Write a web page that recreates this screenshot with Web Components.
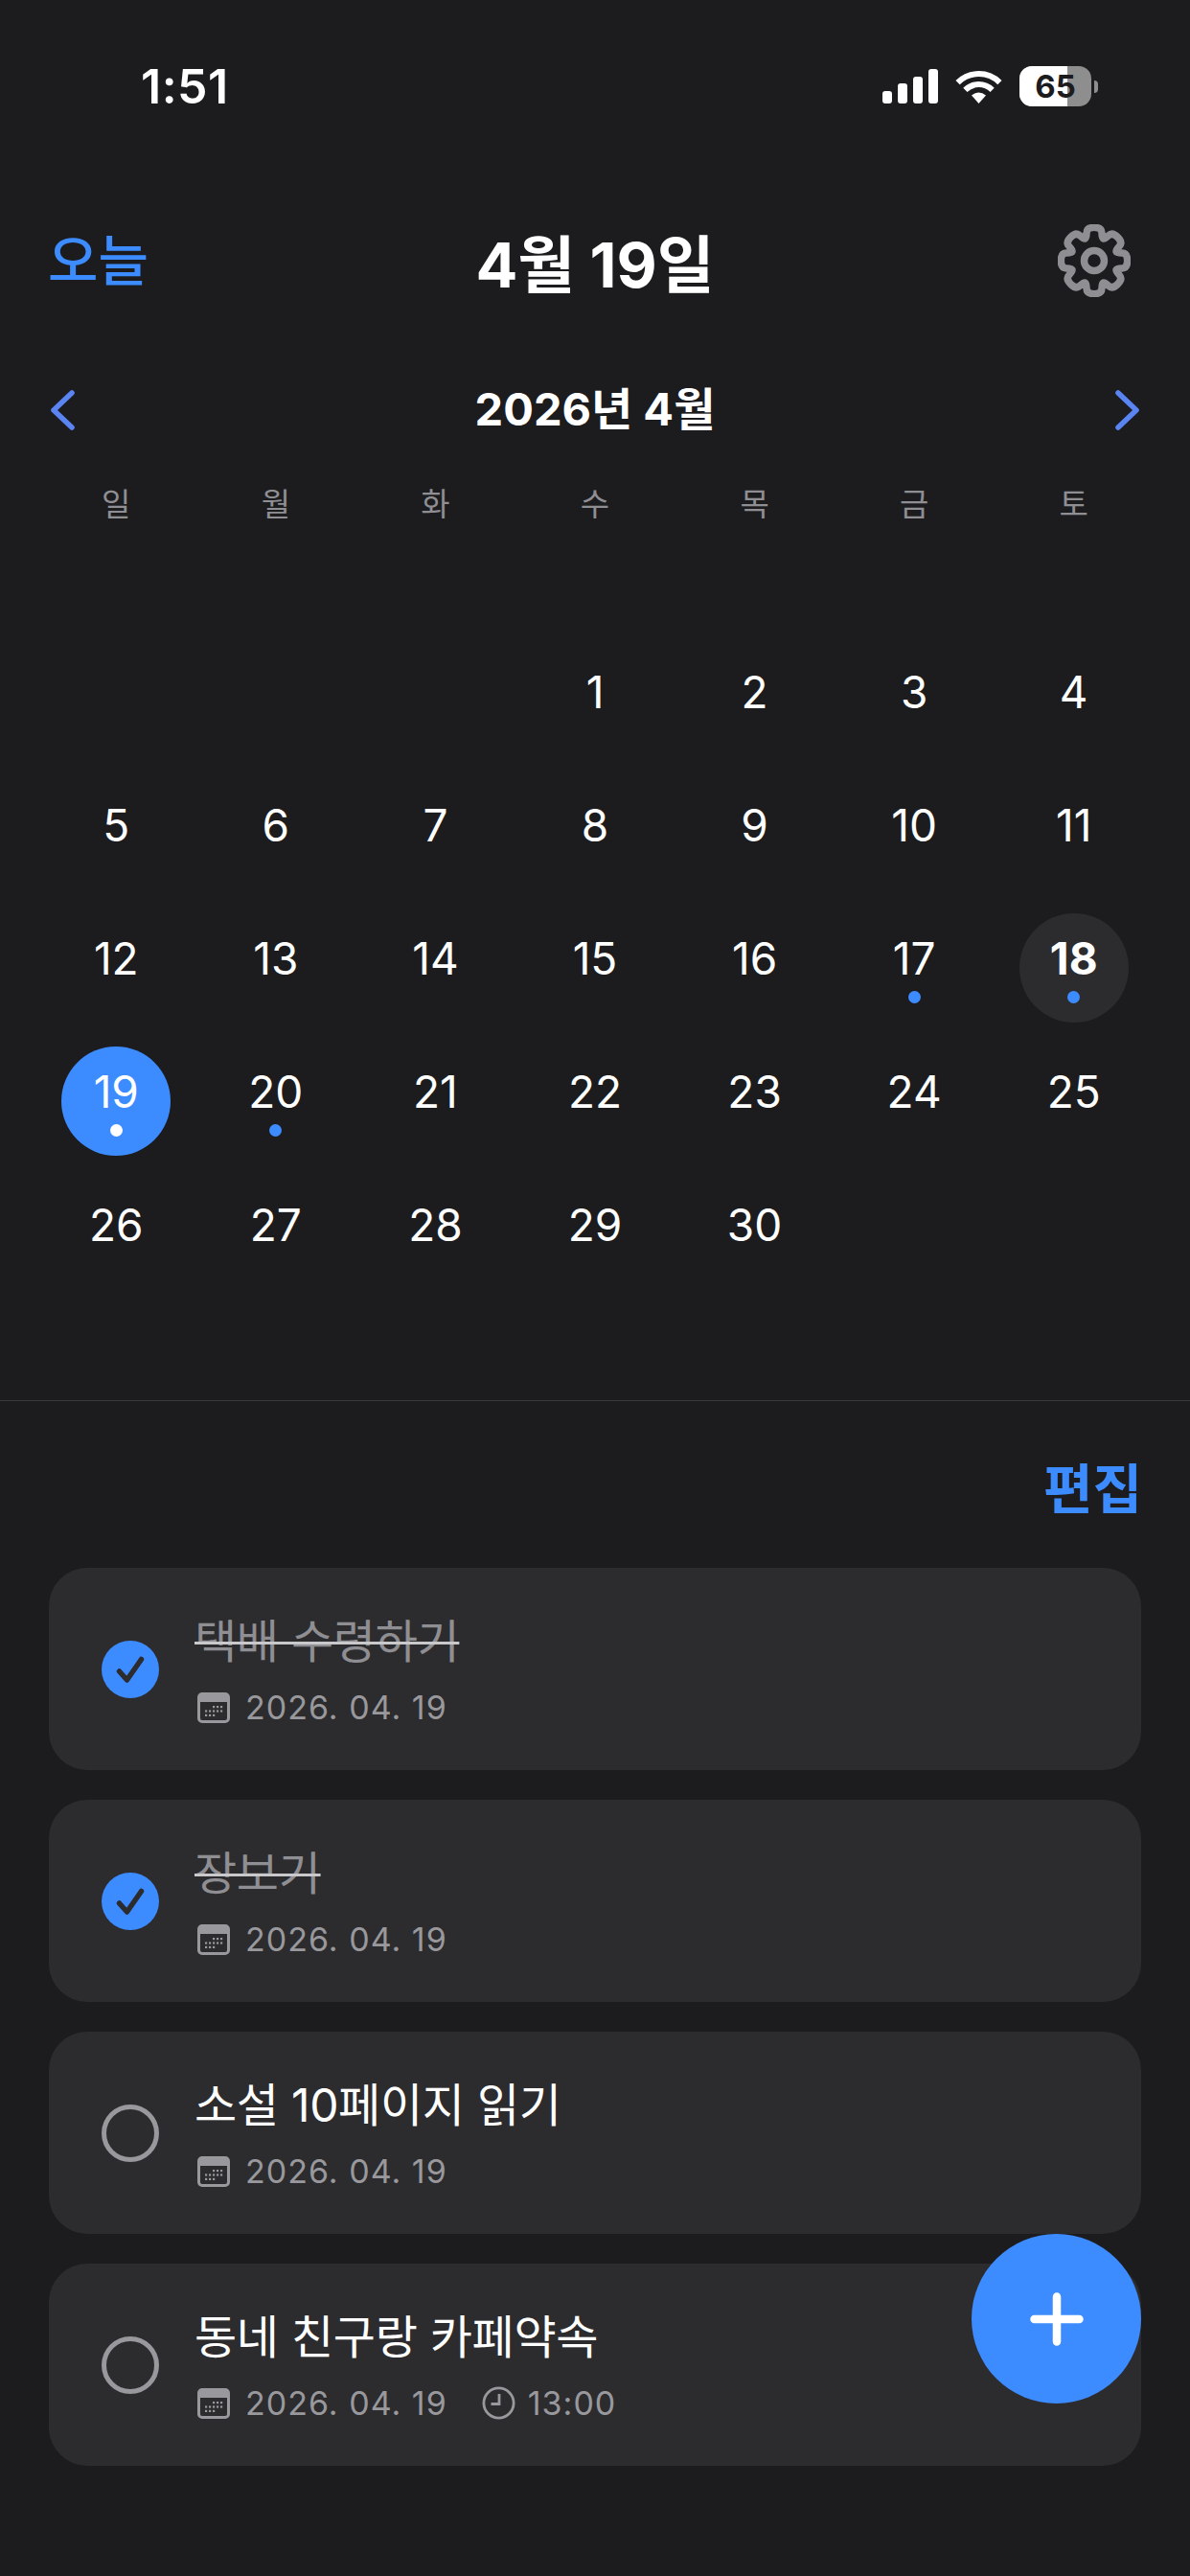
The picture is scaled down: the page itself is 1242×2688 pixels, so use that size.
<!DOCTYPE html>
<html lang="ko">
<head>
<meta charset="utf-8">
<title>Todo calendar</title>
<style>
  html, body { margin: 0; background: #1c1c1e; }
  body { font-family: Inter, "Noto Sans CJK KR", sans-serif; color: #fff; }
</style>
</head>
<body>
<todo-app></todo-app>
<script>
// Gear outline with 8 rounded teeth, around 0,0
function gearPath(outer, inner) {
  const pts = [];
  const step = Math.PI / 4;
  for (let i = 0; i < 8; i++) {
    const a = step * i - Math.PI / 2;
    [[inner, -0.42], [outer, -0.28], [outer, 0.28], [inner, 0.42]].forEach(([r, t]) => {
      pts.push([r * Math.cos(a + t * step), r * Math.sin(a + t * step)]);
    });
  }
  // corners become controls, segment middles stay on the curve
  const mid = (p, q) => ((p[0] + q[0]) / 2).toFixed(2) + ' ' + ((p[1] + q[1]) / 2).toFixed(2);
  let d = 'M' + mid(pts[pts.length - 1], pts[0]);
  pts.forEach((p, i) => {
    d += 'Q' + p[0].toFixed(2) + ' ' + p[1].toFixed(2) + ' ' + mid(p, pts[(i + 1) % pts.length]);
  });
  return d + 'Z';
}

class StatusBar extends HTMLElement {
  constructor() {
    super();
    this.attachShadow({ mode: 'open' });
    this.shadowRoot.innerHTML = `
    <style>
      :host { display: flex; align-items: center; justify-content: space-between; height: 180px; padding: 0 96px 0 147px; box-sizing: border-box; }
      .time { font-size: 50px; font-weight: 600; letter-spacing: 0.5px; }
      .icons { display: flex; align-items: center; gap: 18px; }
      .signal { display: block; }
      .battery { position: relative; display: flex; width: 75px; height: 42px; border-radius: 13px; overflow: hidden; background: #8e8e8e; }
      .battery .fill { width: 50px; background: #fff; }
      .battery .num { position: absolute; inset: 0; display: flex; align-items: center; justify-content: center; font-size: 33px; font-weight: 700; color: #1c1c1e; }
      .nub { width: 4px; height: 13px; margin-left: -15px; background: #8e8e8e; border-radius: 0 4px 4px 0; }
    </style>
    <span class="time">1:51</span>
    <div class="icons">
      <svg class="signal" width="58" height="36" viewBox="0 0 58 36" fill="#fff">
        <rect x="0" y="23" width="10" height="13" rx="3"/>
        <rect x="16" y="15" width="10" height="21" rx="3"/>
        <rect x="32" y="8" width="10" height="28" rx="3"/>
        <rect x="48" y="0" width="10" height="36" rx="3"/>
      </svg>
      <svg width="49" height="36" viewBox="0 0 49 36" fill="none" stroke="#fff" stroke-width="6">
        <path d="M2.6 14.1A31 31 0 0 1 46.4 14.1"/>
        <path d="M10.4 21.9A20 20 0 0 1 38.6 21.9"/>
        <path d="M17 27.5Q24.5 21.5 32 27.5L24.5 36Z" fill="#fff" stroke="none"/>
      </svg>
      <div class="battery"><div class="fill"></div><div class="num">65</div></div>
      <div class="nub"></div>
    </div>`;
  }
}
customElements.define('status-bar', StatusBar);

class AppHeader extends HTMLElement {
  constructor() {
    super();
    this.attachShadow({ mode: 'open' });
    this.shadowRoot.innerHTML = `
    <style>
      :host { display: flex; align-items: center; justify-content: space-between; height: 184px; padding: 0 62px 0 50px; position: relative; }
      .today { font-size: 57px; font-weight: 500; color: #3d8cff; line-height: 1; }
      .title { position: absolute; left: 0; right: 0; text-align: center; font-size: 65px; font-weight: 700; }
      svg { display: block; }
    </style>
    <span class="today">오늘</span>
    <span class="title">4월 19일</span>
    <svg width="76" height="76" viewBox="-38 -38 76 76" fill="none" stroke="#8e8e93" stroke-width="7.5" stroke-linejoin="round">
      <path d="${gearPath(35.5, 25)}"/>
      <circle r="10.5"/>
    </svg>`;
  }
}
customElements.define('app-header', AppHeader);

class DayCell extends HTMLElement {
  constructor() {
    super();
    this.attachShadow({ mode: 'open' });
    this.shadowRoot.innerHTML = `
    <style>
      :host { display: flex; align-items: center; justify-content: center; height: 139px; }
      .circle { width: 114px; height: 114px; border-radius: 50%; box-sizing: border-box; padding-top: 27px; display: flex; flex-direction: column; align-items: center; }
      .num { height: 40px; line-height: 40px; font-size: 46px; font-weight: 380; color: #fff; }
      .dot { width: 13px; height: 13px; margin-top: 14px; border-radius: 50%; visibility: hidden; background: #3d8cff; }
      :host([dot]) .dot { visibility: visible; }
      :host([today]) .circle { background: #2c2c2e; }
      :host([today]) .num { font-weight: 700; }
      :host([selected]) .circle { background: #3d8cff; }
      :host([selected]) .dot { background: #fff; }
    </style>
    <div class="circle"><span class="num"><slot></slot></span><span class="dot"></span></div>`;
  }
}
customElements.define('day-cell', DayCell);

class MonthCalendar extends HTMLElement {
  constructor() {
    super();
    this.attachShadow({ mode: 'open' });
    const names = ['일', '월', '화', '수', '목', '금', '토'];
    const marks = { 17: 'dot', 18: 'dot today', 19: 'dot selected', 20: 'dot' };
    let days = '<day-cell></day-cell>'.repeat(3);
    for (let d = 1; d <= 30; d++) {
      days += `<day-cell ${marks[d] || ''}>${d}</day-cell>`;
    }
    this.shadowRoot.innerHTML = `
    <style>
      :host { display: block; padding: 0 38px; }
      .month { display: flex; align-items: center; justify-content: space-between; height: 128px; margin: 0 -38px; padding: 0 52px 0 52px; position: relative; }
      .month span { position: absolute; left: 0; right: 0; text-align: center; font-size: 47px; font-weight: 700; line-height: 60px; top: 33px; }
      .grid { display: grid; grid-template-columns: repeat(7, 1fr); }
      .week { height: 64px; align-items: center; font-size: 33px; color: #8e8e93; text-align: center; }
      .days { padding-top: 106px; }
      svg { display: block; }
    </style>
    <div class="month">
      <svg width="26" height="42" viewBox="0 0 26 42" fill="none" stroke="#5a84f2" stroke-width="5.5" stroke-linecap="round" stroke-linejoin="round"><path d="M23 3L4 21L23 39"/></svg>
      <span>2026년 4월</span>
      <svg width="26" height="42" viewBox="0 0 26 42" fill="none" stroke="#5a84f2" stroke-width="5.5" stroke-linecap="round" stroke-linejoin="round"><path d="M3 3L22 21L3 39"/></svg>
    </div>
    <div class="grid week">${names.map((n) => `<div>${n}</div>`).join('')}</div>
    <div class="grid days">${days}</div>`;
  }
}
customElements.define('month-calendar', MonthCalendar);

class TodoCard extends HTMLElement {
  constructor() {
    super();
    this.attachShadow({ mode: 'open' });
    const dots = [];
    for (let r = 0; r < 3; r++) {
      for (let c = 0; c < 5; c++) {
        if ((r === 0 && c < 2) || (r === 2 && c > 2)) continue;
        dots.push(`<rect x="${8 + c * 4}" y="${14 + r * 4.4}" width="2.2" height="2.2"/>`);
      }
    }
    const time = this.getAttribute('time');
    this.shadowRoot.innerHTML = `
    <style>
      :host { display: flex; align-items: center; height: 211px; padding-left: 55px; gap: 37px; background: #2c2c2e; border-radius: 40px; box-sizing: border-box; }
      .check { flex: none; width: 60px; height: 60px; display: block; }
      .body { display: flex; flex-direction: column; gap: 18px; }
      .title { font-size: 48px; line-height: 62px; color: #fff; letter-spacing: -0.3px; }
      :host([done]) .title { color: #8e8e93; text-decoration: line-through; text-decoration-color: #c9c9cb; text-decoration-thickness: 3px; }
      .meta { display: flex; align-items: center; gap: 16px; font-size: 34px; line-height: 40px; color: #98989d; letter-spacing: 1px; margin-left: 3px; }
      .meta svg { display: block; flex: none; }
      .clock { margin-left: 20px; }
    </style>
    ${this.hasAttribute('done')
      ? `<svg class="check" viewBox="0 0 60 60"><circle cx="30" cy="30" r="30" fill="#3d8cff"/><path d="M18.5 32L26.5 41L41.5 19.5" fill="none" stroke="#2c2c2e" stroke-width="5.5" stroke-linecap="round" stroke-linejoin="round"/></svg>`
      : `<svg class="check" viewBox="0 0 60 60"><circle cx="30" cy="30" r="27.5" fill="none" stroke="#98989d" stroke-width="5"/></svg>`}
    <div class="body">
      <div class="title"><slot></slot></div>
      <div class="meta">
        <svg width="34" height="32" viewBox="0 0 34 32" fill="#98989d">
          <path fill-rule="evenodd" d="M5 0H29A5 5 0 0 1 34 5V27A5 5 0 0 1 29 32H5A5 5 0 0 1 0 27V5A5 5 0 0 1 5 0ZM3 10V27A2 2 0 0 0 5 29H29A2 2 0 0 0 31 27V10Z"/>
          ${dots.join('')}
        </svg>
        <span>2026. 04. 19</span>
        ${time ? `<svg class="clock" width="35" height="35" viewBox="0 0 35 35" fill="none" stroke="#98989d" stroke-width="2.8"><circle cx="17.5" cy="17.5" r="15.6"/><path d="M18 8V18.5H9.5"/></svg><span style="margin-left:-3px">${time}</span>` : ''}
      </div>
    </div>`;
  }
}
customElements.define('todo-card', TodoCard);

class TodoApp extends HTMLElement {
  constructor() {
    super();
    this.attachShadow({ mode: 'open' });
    this.shadowRoot.innerHTML = `
    <style>
      :host { display: block; position: relative; width: 1242px; height: 2688px; overflow: hidden; background: #1c1c1e; }
      .divider { height: 1px; margin-top: 104px; background: #3a3a3c; }
      .edit { height: 174px; display: flex; align-items: center; justify-content: flex-end; padding-right: 50px; font-size: 56px; font-weight: 600; color: #3d8cff; }
      .list { display: flex; flex-direction: column; gap: 31px; padding: 0 51px; }
      .fab { position: absolute; left: 1014px; top: 2331px; width: 177px; height: 177px; border-radius: 50%; background: #3d8cff; display: flex; align-items: center; justify-content: center; }
      .fab svg { display: block; }
    </style>
    <status-bar></status-bar>
    <app-header></app-header>
    <month-calendar></month-calendar>
    <div class="divider"></div>
    <div class="edit">편집</div>
    <div class="list">
      <todo-card done>택배 수령하기</todo-card>
      <todo-card done>장보기</todo-card>
      <todo-card>소설 10페이지 읽기</todo-card>
      <todo-card time="13:00">동네 친구랑 카페약속</todo-card>
    </div>
    <div class="fab">
      <svg width="56" height="56" viewBox="0 0 56 56" fill="none" stroke="#fff" stroke-width="8.5" stroke-linecap="round"><path d="M28 4.5V51.5M4.5 28H51.5"/></svg>
    </div>`;
  }
}
customElements.define('todo-app', TodoApp);
</script>
</body>
</html>
